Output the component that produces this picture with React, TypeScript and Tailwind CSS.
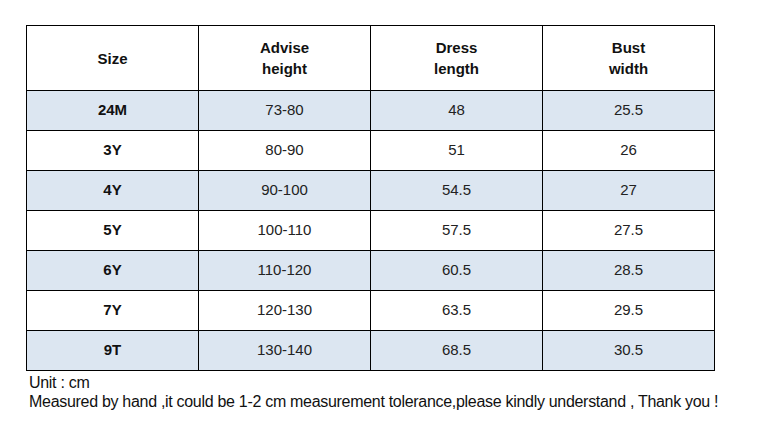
import React from "react";

const rows = [
  ["24M", "73-80", "48", "25.5"],
  ["3Y", "80-90", "51", "26"],
  ["4Y", "90-100", "54.5", "27"],
  ["5Y", "100-110", "57.5", "27.5"],
  ["6Y", "110-120", "60.5", "28.5"],
  ["7Y", "120-130", "63.5", "29.5"],
  ["9T", "130-140", "68.5", "30.5"],
];

const headers: [string, string?][] = [["Size"], ["Advise", "height"], ["Dress", "length"], ["Bust", "width"]];

export default function App() {
  return (
    <div
      className="w-[771px] h-[436px] bg-white text-[#111] overflow-hidden"
      style={{ fontFamily: '"Liberation Sans", Arial, sans-serif' }}
    >
      <div className="pt-[25px] pl-[26px]">
        <div className="w-[689px] bg-black p-px grid grid-cols-4 gap-px">
          {headers.map((h, i) => (
            <div
              key={i}
              className="bg-white h-[64px] flex flex-col items-center justify-center text-[15px] font-bold leading-[21px]"
            >
              <span>{h[0]}</span>
              {h[1] && <span>{h[1]}</span>}
            </div>
          ))}
          {rows.map((r, ri) =>
            r.map((c, ci) => (
              <div
                key={ri + "-" + ci}
                className={
                  "h-[39px] flex items-center justify-center text-[15px] " +
                  (ri % 2 === 0 ? "bg-[#dce6f1] " : "bg-white ") +
                  (ci === 0 ? "font-bold" : "text-[#222]")
                }
              >
                {c}
              </div>
            ))
          )}
        </div>
        <div className="pl-[3px] pt-[2px] text-[16px] leading-[19px] text-[#111] tracking-[-0.3px]">
          <div>Unit : cm</div>
          <div>Measured by hand ,it could be 1-2 cm measurement tolerance,please kindly understand , Thank you !</div>
        </div>
      </div>
    </div>
  );
}
